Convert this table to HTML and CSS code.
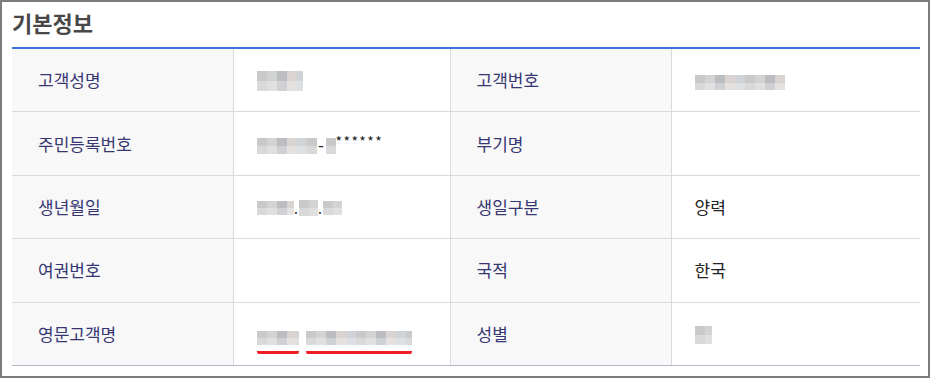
FILE: index.html
```html
<!DOCTYPE html>
<html lang="ko">
  <head>
    <meta charset="UTF-8" />
    <meta name="viewport" content="width=device-width, initial-scale=1.0" />
    <title>기본정보</title>
    <link rel="stylesheet" href="styles.css">
  </head>
  <body>
    <div class="panel">
      <h2 class="panel-title">기본정보</h2>

      <!-- Customer basic info -->
      <table class="info-table">
        <colgroup>
          <col class="col-label" />
          <col class="col-value" />
          <col class="col-label" />
          <col class="col-value-wide" />
        </colgroup>
        <tbody>
          <tr>
            <th>고객성명</th>
            <td><span class="mask mask-name"></span></td>
            <th>고객번호</th>
            <td><span class="mask mask-custno"></span></td>
          </tr>
          <tr>
            <th>주민등록번호</th>
            <td class="rrn">
              <span class="mask mask-rrn"></span><span class="dash">-</span><span class="mask mask-one"></span><span class="stars">******</span>
            </td>
            <th>부기명</th>
            <td></td>
          </tr>
          <tr>
            <th>생년월일</th>
            <td class="birth">
              <span class="mask mask-year"></span><span class="dot">.</span><span class="mask mask-mm"></span><span class="dot">.</span><span class="mask mask-dd"></span>
            </td>
            <th>생일구분</th>
            <td>양력</td>
          </tr>
          <tr>
            <th>여권번호</th>
            <td></td>
            <th>국적</th>
            <td>한국</td>
          </tr>
          <tr class="last">
            <th>영문고객명</th>
            <td class="eng-name">
              <span class="marked"><span class="mask mask-first"></span></span>
              <span class="marked"><span class="mask mask-last"></span></span>
            </td>
            <th>성별</th>
            <td><span class="mask mask-sex"></span></td>
          </tr>
        </tbody>
      </table>
    </div>
  </body>
</html>
```

FILE: styles.css
```css
/* Page frame */
body {
  margin: 0;
  font-family: "Noto Sans CJK KR", "Noto Sans", sans-serif;
  background: #fff;
}

.panel {
  box-sizing: border-box;
  width: 930px;
  height: 378px;
  border: 2px solid #7b7b7b;
  padding: 0 8px 0 10px;
}

/* Section heading */
.panel-title {
  margin: 0;
  height: 45px;
  line-height: 40px;
  font-size: 22px;
  font-weight: bold;
  color: #484848;
  border-bottom: 2px solid #3878d4;
}

/* Info table */
.info-table {
  width: 908px;
  border-collapse: collapse;
  table-layout: fixed;
}

.col-label {
  width: 221px;
}

.col-value {
  width: 217px;
}

.col-value-wide {
  width: 249px;
}

.info-table th,
.info-table td {
  height: 62.4px;
  padding: 0 0 0 23px;
  border-bottom: 1px solid #dadada;
  border-right: 1px solid #dadada;
  font-size: 17px;
  line-height: 20px;
  text-align: left;
  vertical-align: middle;
}

.info-table th {
  padding-left: 26px;
  background: #f8f8f8;
  color: #363673;
  font-weight: normal;
}

.info-table td {
  color: #222;
}

.info-table tr > :last-child {
  border-right: none;
}

.info-table tr.last th,
.info-table tr.last td {
  border-bottom-color: #b6b6c6;
}

/* Pixelated masks over private values */
.mask {
  display: inline-block;
  vertical-align: middle;
  height: 20px;
  background:
    linear-gradient(to bottom, transparent 50%, rgba(255, 255, 255, 0.3) 50%),
    repeating-linear-gradient(90deg, #c9c9c9 0 10px, #d2d3d3 10px 20px, #bcbdc1 20px 30px, #d9d4d2 30px 40px, #cfd2d6 40px 50px);
}

.mask-name {
  width: 46px;
}

.mask-custno {
  width: 90px;
  height: 15px;
}

.rrn,
.birth {
  white-space: nowrap;
}

.mask-rrn {
  width: 60px;
  height: 16px;
}

.mask-one {
  width: 10px;
  height: 16px;
}

.dash {
  display: inline-block;
  width: 9px;
  text-align: center;
  vertical-align: middle;
}

.stars {
  font-size: 14px;
  letter-spacing: 1.4px;
  vertical-align: 3px;
  color: #222;
}

.mask-year {
  width: 37px;
  height: 14px;
}

.mask-mm {
  width: 19px;
  height: 16px;
}

.mask-dd {
  width: 19px;
  height: 14px;
}

.dot {
  display: inline-block;
  width: 5px;
  text-align: center;
  vertical-align: -2px;
  font-size: 14px;
}

.eng-name {
  white-space: nowrap;
}

/* Red underline under the english name parts */
.marked {
  display: inline-block;
  vertical-align: middle;
  padding: 4px 0 5px;
  border-bottom: 3px solid #ee1c25;
  border-radius: 2px;
  margin-top: 8px;
}

.mask-first {
  width: 42px;
  height: 14px;
}

.mask-last {
  width: 106px;
  height: 14px;
}

.eng-name .marked + .marked {
  margin-left: 3px;
}

.mask-sex {
  width: 17px;
  height: 18px;
}
```
